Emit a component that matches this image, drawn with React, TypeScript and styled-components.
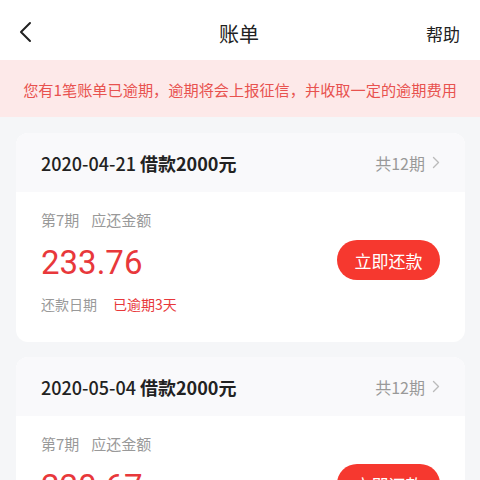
import { createGlobalStyle, styled } from "styled-components";

const GlobalStyle = createGlobalStyle`
  html, body {
    margin: 0;
    padding: 0;
    background: #f5f6f8;
    font-family: "Noto Sans CJK SC", "Noto Sans", sans-serif;
  }
`;

type Bill = {
  date: string;
  loan: string;
  total: string;
  period: string;
  amount: string;
  status: string;
};

const bills: Bill[] = [
  { date: "2020-04-21", loan: "借款2000元", total: "共12期", period: "第7期", amount: "233.76", status: "已逾期3天" },
  { date: "2020-05-04", loan: "借款2000元", total: "共12期", period: "第7期", amount: "220.67", status: "已逾期3天" },
];

export default function App() {
  return (
    <Page>
      <GlobalStyle />
      <NavBar>
        <BackButton>
          <svg width="14" height="22" viewBox="0 0 14 22" fill="none">
            <path d="M12 2 L3 11 L12 20" stroke="#222" strokeWidth="2" strokeLinecap="round" strokeLinejoin="round" />
          </svg>
        </BackButton>
        <Title>账单</Title>
        <Help>帮助</Help>
      </NavBar>
      <Notice>您有1笔账单已逾期，逾期将会上报征信，并收取一定的逾期费用</Notice>
      <List>
        {bills.map((b) => (
          <Card key={b.date}>
            <CardHead>
              <HeadTitle>
                <DateText>{b.date}</DateText> <strong>{b.loan}</strong>
              </HeadTitle>
              <Total>
                {b.total}
                <svg width="8" height="13" viewBox="0 0 8 13" fill="none">
                  <path d="M1.5 1.5 L6.5 6.5 L1.5 11.5" stroke="#bbb" strokeWidth="1.4" strokeLinecap="round" strokeLinejoin="round" />
                </svg>
              </Total>
            </CardHead>
            <CardBody>
              <Info>
                <Label>
                  {b.period}
                  <Gap />应还金额
                </Label>
                <Amount>{b.amount}</Amount>
                <DueRow>
                  还款日期<Overdue>{b.status}</Overdue>
                </DueRow>
              </Info>
              <PayButton>立即还款</PayButton>
            </CardBody>
          </Card>
        ))}
      </List>
    </Page>
  );
}

const Page = styled.div`
  width: 480px;
  height: 480px;
  overflow: hidden;
  background: #f5f6f8;
`;

const NavBar = styled.div`
  height: 60px;
  background: #fff;
  display: grid;
  grid-template-columns: 80px 1fr 80px;
  align-items: center;
  padding: 0 20px 0 18px;
  box-sizing: border-box;
`;

const BackButton = styled.div`
  display: flex;
  align-items: center;
  padding-top: 4px;
`;

const Title = styled.div`
  text-align: center;
  font-size: 20px;
  color: #222;
  margin-top: 7px;
`;

const Help = styled.div`
  text-align: right;
  font-size: 17px;
  color: #222;
  margin-top: 7px;
`;

const Notice = styled.div`
  height: 57px;
  background: #fde9e9;
  color: #e8524f;
  font-size: 15.2px;
  display: flex;
  align-items: center;
  justify-content: center;
  white-space: nowrap;
`;

const List = styled.div`
  display: flex;
  flex-direction: column;
  gap: 15px;
  padding: 16px 15px 0 16px;
`;

const Card = styled.div`
  background: #fff;
  border-radius: 12px;
  overflow: hidden;
  flex-shrink: 0;
`;

const CardHead = styled.div`
  height: 59px;
  background: #f9f9fb;
  display: flex;
  align-items: center;
  justify-content: space-between;
  padding: 0 25px;
`;

const HeadTitle = styled.div`
  font-size: 18px;
  color: #222;
  strong {
    font-weight: 700;
  }
`;

const DateText = styled.span`
  font-weight: 500;
`;

const Total = styled.div`
  display: flex;
  align-items: center;
  gap: 7px;
  font-size: 16px;
  color: #999;
`;

const CardBody = styled.div`
  height: 150px;
  display: flex;
  align-items: flex-start;
  justify-content: space-between;
  padding: 16px 25px 0 25px;
  box-sizing: border-box;
`;

const Info = styled.div`
  display: flex;
  flex-direction: column;
`;

const Label = styled.div`
  font-size: 15px;
  color: #999;
  line-height: 24px;
`;

const Gap = styled.span`
  display: inline-block;
  width: 12px;
`;

const Amount = styled.div`
  font-family: Roboto, "Noto Sans", sans-serif;
  font-size: 33px;
  color: #e8383b;
  line-height: 40px;
  margin-top: 11px;
`;

const DueRow = styled.div`
  font-size: 14px;
  color: #999;
  line-height: 22px;
  margin-top: 10px;
`;

const Overdue = styled.span`
  color: #e8383b;
  margin-left: 16px;
`;

const PayButton = styled.button`
  margin-top: 32px;
  width: 103px;
  height: 40px;
  border: none;
  border-radius: 20px;
  background: #f6382f;
  color: #fff;
  font-family: "Noto Sans CJK SC", sans-serif;
  font-size: 17px;
  padding: 0;
`;
